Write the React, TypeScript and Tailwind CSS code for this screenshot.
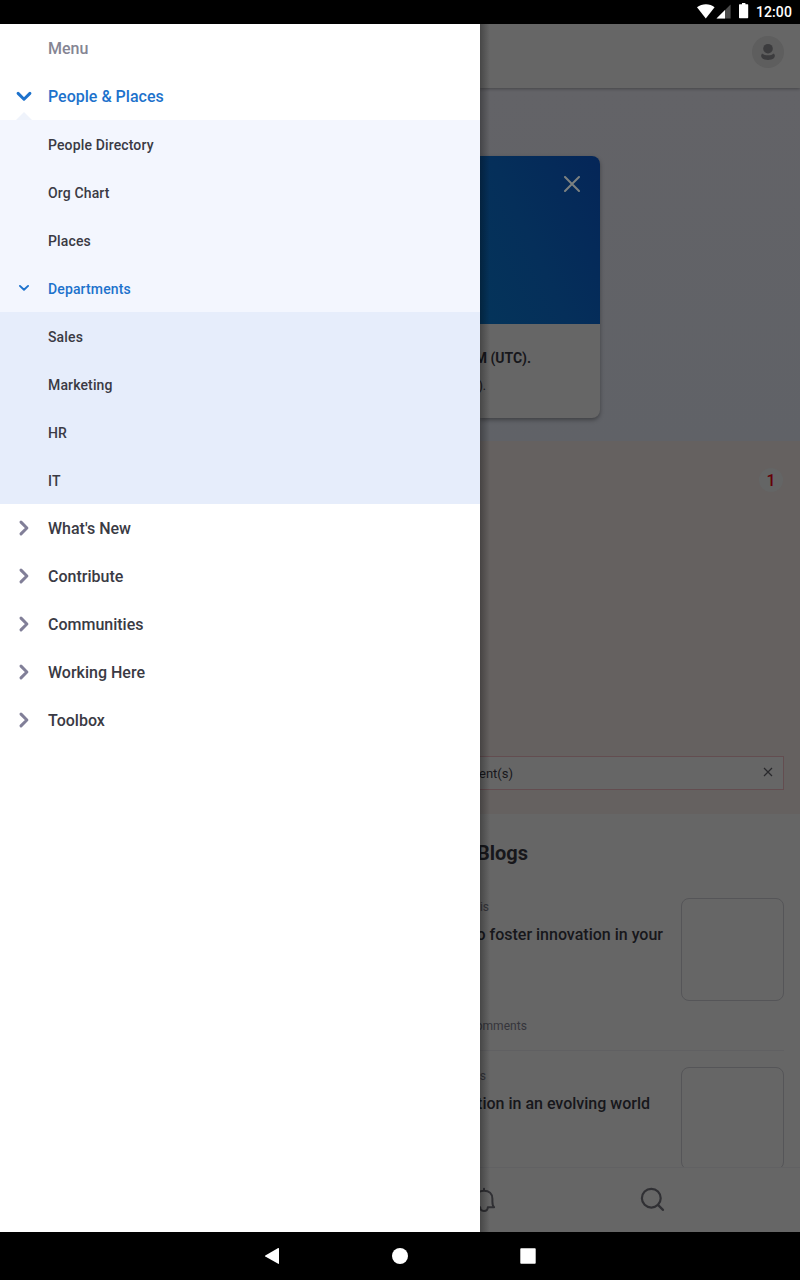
import React from "react";

const subItems = ["People Directory", "Org Chart", "Places"];
const departments = ["Sales", "Marketing", "HR", "IT"];
const sections = ["What's New", "Contribute", "Communities", "Working Here", "Toolbox"];

function StatusBar() {
  return (
    <div className="flex h-6 items-center justify-end bg-black pr-2 text-white">
      <svg className="h-6 w-[52px]" viewBox="0 0 52 24" fill="#fff">
        <path d="M0 7.3C5 3.1 13 3.1 17.6 7.3L8.8 18.4Z" />
        <path d="M33.6 4.6V18.4H19.5Z" fill="#4c4c4c" />
        <path d="M28 10V18.4H19.5Z" />
        <path d="M45 3h3.4v1.2h2.2c.3 0 .6.3.6.6V17.6c0 .3-.3.6-.6.6h-8c-.3 0-.6-.3-.6-.6V4.8c0-.3.3-.6.6-.6H45Z" />
      </svg>
      <span className="ml-[7px] text-[14px] font-medium leading-6 tracking-[0.1px]">12:00</span>
    </div>
  );
}

function Chevron({ small = false, down = false }: { small?: boolean; down?: boolean }) {
  return (
    <span className="flex w-12 shrink-0 items-center justify-center">
      <svg
        className="h-6 w-6"
        viewBox="0 0 24 24"
        fill="none"
        stroke={down ? "#1d72cc" : "#817f98"}
        strokeWidth={small ? 1.9 : 3}
        strokeLinecap="round"
        strokeLinejoin="round"
      >
        <path d={down ? (small ? "M7.9 9.9L12 13.8L16.1 9.9" : "M6.1 9.4L12 15.2L17.9 9.4") : "M9 6.1L14.9 12L9 17.9"} />
      </svg>
    </span>
  );
}

function Drawer() {
  return (
    <nav className="w-[480px] shrink-0 bg-white text-[#3a3a44]">
      <div className="flex h-12 items-center pt-0.5 pl-12 text-base font-medium text-[#858593]">Menu</div>
      <div className="relative flex h-12 items-center text-base font-medium text-[#1d72cc]">
        <Chevron down />
        <span className="pt-0.5">People &amp; Places</span>
        <svg className="absolute bottom-0 left-4 h-2 w-4" viewBox="0 0 16 8" fill="#eff3fb">
          <path d="M0 8L8 0L16 8Z" />
        </svg>
      </div>
      <div className="bg-[#f3f6fe] text-sm font-medium tracking-[0.14px]">
        {subItems.map((label) => (
          <div key={label} className="flex h-12 items-center pl-12 pt-0.5">{label}</div>
        ))}
        <div className="flex h-12 items-center text-[#1d72cc]">
          <Chevron down small />
          <span className="pt-0.5">Departments</span>
        </div>
      </div>
      <div className="bg-[#e6edfb] text-sm font-medium tracking-[0.14px]">
        {departments.map((label) => (
          <div key={label} className="flex h-12 items-center pl-12 pt-0.5">{label}</div>
        ))}
      </div>
      {sections.map((label) => (
        <div key={label} className="flex h-12 items-center text-base font-medium">
          <Chevron />
          <span className="pt-0.5">{label}</span>
        </div>
      ))}
    </nav>
  );
}

function Post({ author, title, titleWidth, comments }: { author: string; title: string; titleWidth: string; comments?: string }) {
  return (
    <div className="flex h-[152px] justify-between">
      <div className="flex flex-col">
        <div className={`${comments ? "w-[9px]" : "w-1.5"} flex justify-end pt-px text-xs leading-4 whitespace-nowrap text-[#35353b]`}>{author}</div>
        <div className={`${titleWidth} mt-2 flex justify-end text-base leading-6 font-medium whitespace-nowrap`}>{title}</div>
        {comments && <div className="mt-[71px] flex w-[47px] justify-end text-xs leading-4 tracking-[0.05px] whitespace-nowrap text-[#35353b]">{comments}</div>}
      </div>
      <div className="h-[103px] w-[103px] rounded-lg border border-[#555558]" />
    </div>
  );
}

function Page() {
  return (
    <main className="relative flex min-w-0 flex-1 flex-col overflow-hidden bg-[#666666] text-[#17171b]">
      <header className="z-10 flex h-16 shrink-0 items-start justify-end bg-[#666666] pt-3 pr-4 shadow-[0_1px_3px_rgba(0,0,0,0.3)]">
        <svg className="h-8 w-8" viewBox="0 0 32 32">
          <circle cx="16" cy="16" r="16" fill="#5e5e5e" />
          <circle cx="16" cy="12.7" r="4.8" fill="#3c3c3e" />
          <path d="M10.1 17.4C11.6 18.7 13.7 19.3 16 19.3S20.4 18.7 21.9 17.4C23.2 18.9 23.2 21 21.8 22.2C20.5 23.4 18.3 23.9 16 23.9S11.5 23.4 10.2 22.2C8.8 21 8.8 18.9 10.1 17.4Z" fill="#3c3c3e" />
        </svg>
      </header>

      <section className="h-[353px] shrink-0 bg-linear-to-b from-[#636367] to-[#606267] pt-[68px]">
        <article className="flex h-[262px] w-[120px] flex-col rounded-r-lg bg-[#666666] shadow-[0_2px_4px_rgba(0,0,0,0.35)]">
          <div className="flex h-[168px] justify-end rounded-tr-lg bg-[linear-gradient(65deg,#04345a_0%,#052f5a_45%,#052658_100%)] pt-5 pr-5">
            <svg className="h-4 w-4" viewBox="0 0 16 16" stroke="#7c8180" strokeWidth="2" strokeLinecap="round">
              <path d="M1 1L15 15M15 1L1 15" />
            </svg>
          </div>
          <div className="mt-[22px] flex w-[51px] justify-end text-sm leading-6 font-bold whitespace-nowrap">M (UTC).</div>
          <div className="mt-1 flex w-1.5 justify-end text-xs leading-6 whitespace-nowrap">).</div>
        </article>
      </section>

      <section className="flex h-[373px] shrink-0 flex-col items-end bg-[#656160] px-4 pt-[27px]">
        <div className="mr-px flex h-6 w-6 items-center justify-center rounded-full bg-[#646565] pt-px text-base font-medium text-[#640008]">1</div>
        <div className="-ml-4 mt-auto mb-6 flex h-[34px] w-[304px] items-center justify-between border-y border-r border-[#634d50] bg-[#666666] pr-[11px]">
          <span className="flex w-[33px] justify-end pt-0.5 text-[13px] whitespace-nowrap">ent(s)</span>
          <svg className="mb-0.5 h-2 w-2 overflow-visible" viewBox="0 0 8 8" stroke="#29292c" strokeWidth="1.2">
            <path d="M0 0L8 8M8 0L0 8" />
          </svg>
        </div>
      </section>

      <section className="flex-1 overflow-hidden pr-4 pt-[23px]">
        <h2 className="flex w-12 justify-end text-xl leading-8 font-bold whitespace-nowrap">Blogs</h2>
        <div className="mt-[29px]">
          <Post author="is" title="o foster innovation in your" titleWidth="w-[183px]" comments="omments" />
          <div className="mb-4 h-px bg-[#606062]" />
          <Post author="s" title="tion in an evolving world" titleWidth="w-[170px]" />
        </div>
      </section>

      <footer className="flex h-[65px] shrink-0 items-center border-t border-[#616163] bg-[#666666]">
        <svg className="-ml-[10px] h-7 w-7" viewBox="0 0 28 28" fill="none" stroke="#303034" strokeWidth="2" strokeLinecap="round" strokeLinejoin="round">
          <path d="M14 4.2V2.8M3.5 21.3H10.2C10.2 23.5 11.8 25 14 25S17.8 23.5 17.8 21.3H24.1C22.6 20 22.4 18.2 22.4 15.5V12.7C22.4 7.7 18.9 4.7 14 4.7S5.6 7.7 5.6 12.7V15.5C5.6 18.2 5.4 20 3.5 21.3" />
        </svg>
        <svg className="ml-[141px] h-7 w-7" viewBox="0 0 28 28" fill="none" stroke="#303034" strokeWidth="2.2" strokeLinecap="round">
          <circle cx="12.3" cy="12.2" r="9.4" />
          <path d="M19 18.9L24 23.9" />
        </svg>
      </footer>
      <div className="absolute inset-y-0 left-0 z-20 w-2.5 bg-linear-to-r from-black/30 to-transparent" />
    </main>
  );
}

function NavBar() {
  return (
    <div className="flex h-12 items-center justify-center gap-28 bg-black">
      <svg className="h-4 w-4" viewBox="0 0 16 16" fill="#fff"><path d="M14.2 .1Q15 -.2 15 .7V15.3Q15 16.2 14.2 15.8L1.3 8.5Q.6 8 1.3 7.5Z" /></svg>
      <div className="h-4 w-4 rounded-full bg-white" />
      <svg className="h-4 w-4" viewBox="0 0 16 16" fill="#fff"><rect x="0.3" y="0.3" width="15.4" height="15.4" rx="0.8" /></svg>
    </div>
  );
}

export default function App() {
  return (
    <div className="flex h-[1280px] w-[800px] flex-col overflow-hidden font-['Roboto',sans-serif]">
      <StatusBar />
      <div className="flex min-h-0 flex-1">
        <Drawer />
        <Page />
      </div>
      <NavBar />
    </div>
  );
}
